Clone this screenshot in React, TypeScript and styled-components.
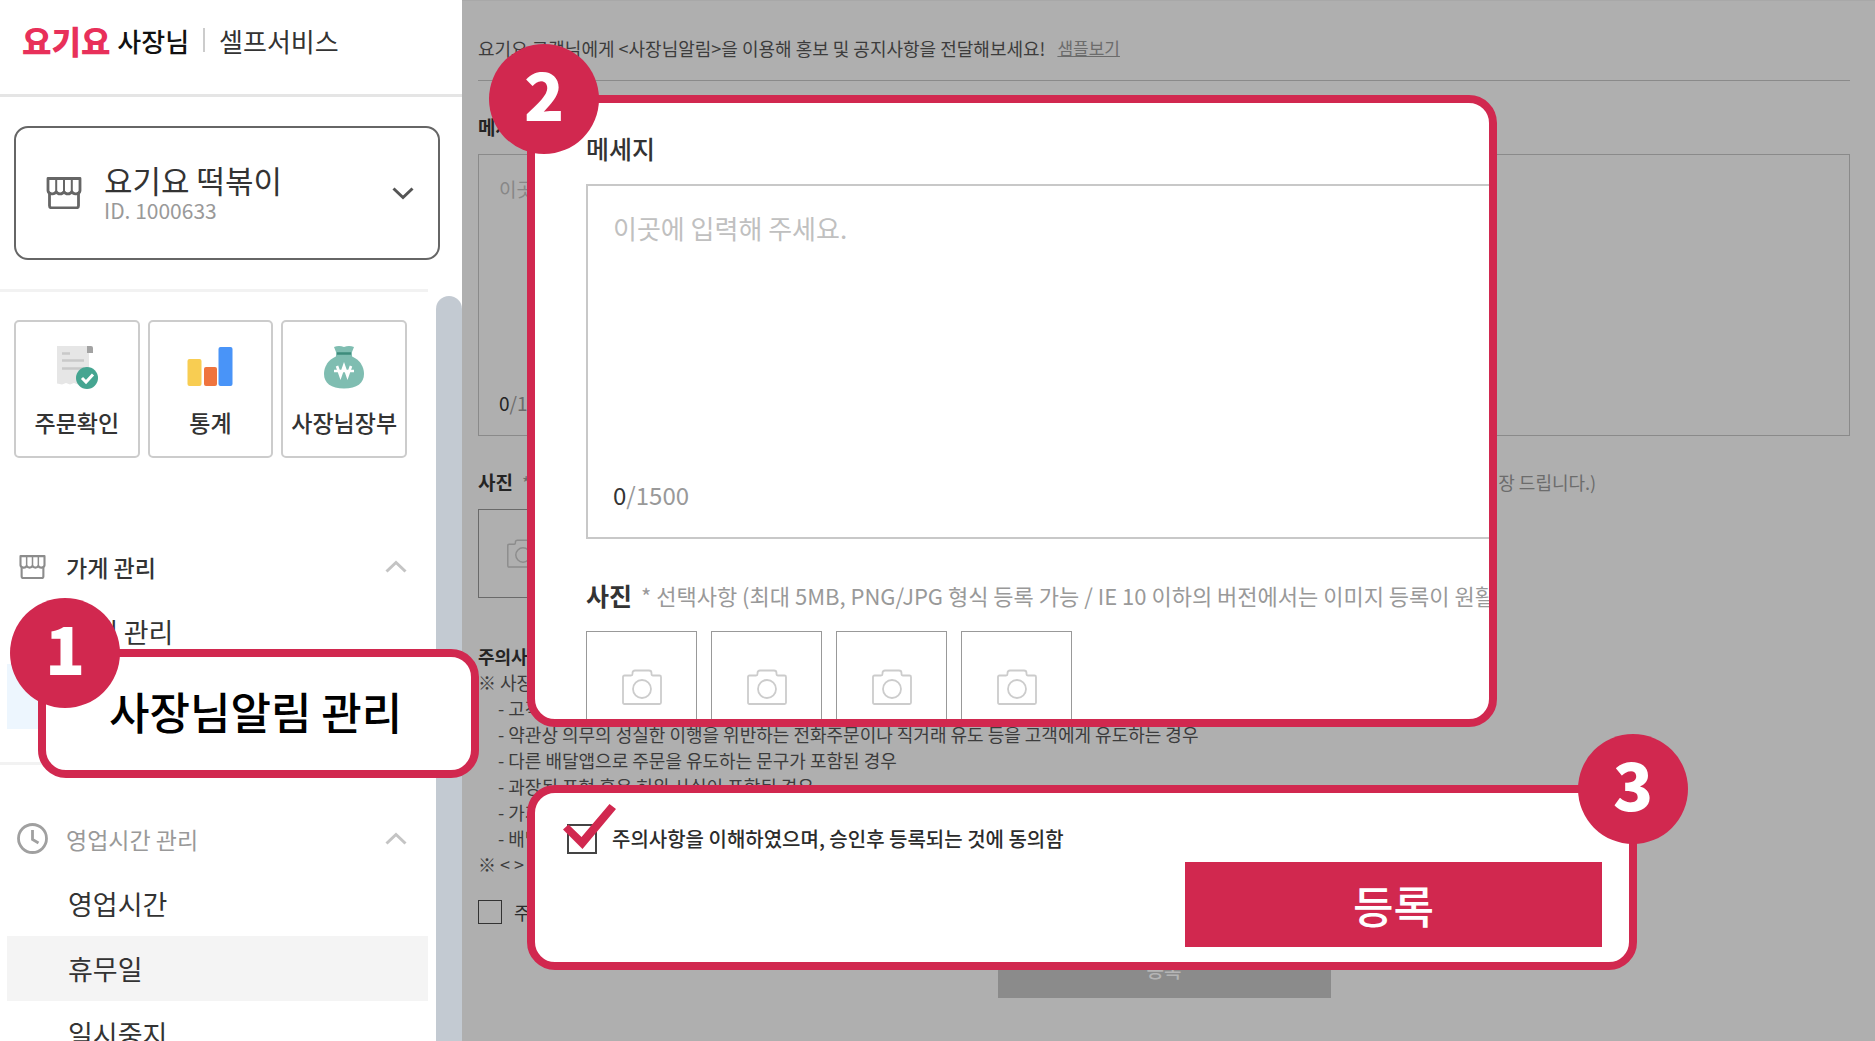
import React from "react";
import styled, { createGlobalStyle, css } from "styled-components";

const BRAND = "#d1284f";

const GlobalStyle = createGlobalStyle`
  *, *::before, *::after { box-sizing: border-box; }
  body {
    margin: 0;
    background: #afafaf;
    font-family: "Noto Sans CJK KR", "Noto Sans", sans-serif;
    color: #333;
  }
  button, input, textarea { font: inherit; color: inherit; }
  h1, h2, p, ul { margin: 0; padding: 0; font: inherit; }
  ul { list-style: none; }
`;

const Page = styled.div`
  position: relative;
  display: grid;
  grid-template-columns: 462px minmax(0, 1fr);
  height: 100vh;
  overflow: hidden;
`;

/* ---------- sidebar ---------- */

const Sidebar = styled.aside`
  display: flex;
  flex-direction: column;
  min-height: 0;
  overflow: hidden;
  background: #fff;
`;

const Brand = styled.header`
  display: flex;
  align-items: center;
  flex: none;
  height: 97px;
  padding: 0 22px 14px;
  border-bottom: 3px solid #e5e5e5;
  white-space: nowrap;
`;

const BrandName = styled.span`
  color: #e8305a;
  font-size: 32px;
  font-weight: 900;
  line-height: 40px;
`;

const BrandRole = styled.span`
  margin-left: 7px;
  color: #111;
  font-size: 26px;
  font-weight: 500;
`;

const BrandService = styled.span`
  display: flex;
  align-items: center;
  margin-left: 14px;
  color: #333;
  font-size: 26px;

  &::before {
    content: "";
    width: 2px;
    height: 24px;
    margin-right: 14px;
    background: #ccc;
  }
`;

const StoreSelect = styled.button`
  display: flex;
  align-items: center;
  flex: none;
  height: 134px;
  margin: 29px 22px 29px 14px;
  padding: 0 24px 0 30px;
  border: 2px solid #666;
  border-radius: 14px;
  background: #fff;
  text-align: left;
`;

const StoreText = styled.span`
  display: flex;
  flex: 1;
  flex-direction: column;
  margin-left: 22px;
`;

const StoreName = styled.span`
  font-size: 31px;
  line-height: 34px;
`;

const StoreId = styled.span`
  color: #999;
  font-size: 21px;
  line-height: 26px;
`;

const NavArea = styled.div`
  display: flex;
  flex: 1;
  justify-content: space-between;
  min-height: 0;
`;

const Nav = styled.nav`
  width: 428px;
  border-top: 3px solid #f2f2f2;
`;

const ScrollThumb = styled.div`
  width: 26px;
  margin-top: 7px;
  border-radius: 13px 13px 0 0;
  background: #c3cad2;
`;

const QuickRow = styled.div`
  display: grid;
  grid-template-columns: repeat(3, 1fr);
  gap: 8px;
  padding: 28px 21px 0 14px;
`;

const QuickButton = styled.button`
  display: flex;
  flex-direction: column;
  align-items: center;
  height: 138px;
  padding: 23px 0 0;
  border: 2px solid #ccc;
  border-radius: 5px;
  background: #fff;
  font-size: 23px;
  font-weight: 500;
  line-height: 32px;
  white-space: nowrap;

  svg { margin-bottom: 17px; }
`;

const Group = styled.section<{ $first?: boolean }>`
  margin-top: ${(p) => (p.$first ? "76px" : "33px")};
  ${(p) =>
    !p.$first &&
    css`
      padding-top: 41px;
      border-top: 3px solid #f2f2f2;
    `}
`;

const GroupHeader = styled.button<{ $muted?: boolean }>`
  display: flex;
  align-items: center;
  width: 100%;
  height: 65px;
  padding: 0 21px 0 16px;
  border: 0;
  background: none;
  color: ${(p) => (p.$muted ? "#999" : "#333")};
  font-size: 23px;
  font-weight: ${(p) => (p.$muted ? 400 : 500)};
  text-align: left;
`;

const GroupIcon = styled.span`
  display: flex;
  justify-content: center;
  width: 33px;
  margin-right: 17px;
`;

const GroupTitle = styled.span`
  flex: 1;
`;

const NavLink = styled.a<{ $tone?: "blue" | "gray" }>`
  display: flex;
  align-items: center;
  height: 65px;
  margin-left: 7px;
  padding-left: 61px;
  background: ${(p) =>
    p.$tone === "blue" ? "#edf6fe" : p.$tone === "gray" ? "#f4f4f4" : "none"};
  color: #333;
  font-size: 27px;
  line-height: 38px;
  text-decoration: none;
`;

/* ---------- form parts ---------- */

const Main = styled.main`
  min-width: 0;
  padding: 0 25px 0 16px;
  border-top: 1px solid #a8a8a8;
  background: #afafaf;
  color: #3c3c3c;
  font-size: 18px;
  line-height: 26px;
`;

const Intro = styled.p`
  display: flex;
  align-items: center;
  gap: 12px;
  height: 80px;
  padding-top: 14px;
  border-bottom: 1px solid #8a8a8a;
  white-space: nowrap;

  a { color: #6c6c6c; font-size: 17px; }
`;

const FieldTitle = styled.div<{ $large?: boolean }>`
  display: flex;
  align-items: center;
  gap: 9px;
  margin: ${(p) => (p.$large ? "40px 0 20px" : "33px 0 14px")};
  color: ${(p) => (p.$large ? "#333" : "#242424")};
  font-size: ${(p) => (p.$large ? "25px" : "19px")};
  line-height: ${(p) => (p.$large ? "32px" : "26px")};
  font-weight: 700;
  white-space: nowrap;

  &:first-of-type {
    margin-top: ${(p) => (p.$large ? "29px" : "33px")};
    font-weight: ${(p) => (p.$large ? 500 : 700)};
  }
`;

const Hint = styled.span<{ $large?: boolean }>`
  color: ${(p) => (p.$large ? "#999" : "#6c6c6c")};
  font-size: ${(p) => (p.$large ? "22px" : "18px")};
  font-weight: 400;
`;

const MessageBox = styled.div<{ $large?: boolean }>`
  display: flex;
  flex-direction: column;
  height: ${(p) => (p.$large ? "355px" : "282px")};
  margin-right: ${(p) => (p.$large ? "-40px" : "0")};
  padding: ${(p) => (p.$large ? "24px 25px" : "20px 20px 18px")};
  border: ${(p) => (p.$large ? "2px solid #c8c8c8" : "1px solid #8a8a8a")};
  font-size: ${(p) => (p.$large ? "24px" : "19px")};
  line-height: ${(p) => (p.$large ? "36px" : "28px")};
`;

const MessageInput = styled.textarea<{ $large?: boolean }>`
  flex: 1;
  padding: 0;
  border: 0;
  outline: 0;
  resize: none;
  background: none;
  font-size: ${(p) => (p.$large ? "26px" : "19px")};

  &::placeholder { color: ${(p) => (p.$large ? "#c0c0c0" : "#878787")}; opacity: 1; }
`;

const Counter = styled.span<{ $large?: boolean }>`
  color: ${(p) => (p.$large ? "#999" : "#6c6c6c")};
  b { color: ${(p) => (p.$large ? "#333" : "#242424")}; font-weight: 400; }
`;

const PhotoRow = styled.div<{ $large?: boolean }>`
  display: flex;
  gap: ${(p) => (p.$large ? "14px" : "11px")};
`;

const PhotoSlot = styled.button<{ $large?: boolean }>`
  display: flex;
  align-items: center;
  justify-content: center;
  width: ${(p) => (p.$large ? "111px" : "89px")};
  height: ${(p) => (p.$large ? "111px" : "89px")};
  padding: 0;
  border: 1px solid ${(p) => (p.$large ? "#999" : "#6a6a6a")};
  background: none;
  color: ${(p) => (p.$large ? "#ccc" : "#8c8c8c")};
`;

const NoticeTitle = styled.h2`
  margin-top: 45px;
  color: #242424;
  font-size: 18px;
  font-weight: 700;
`;

const NoticeLine = styled.li<{ $indent?: boolean }>`
  padding-left: ${(p) => (p.$indent ? "20px" : "0")};
  white-space: nowrap;
`;

const Agree = styled.label<{ $large?: boolean }>`
  display: flex;
  align-items: center;
  gap: ${(p) => (p.$large ? "15px" : "12px")};
  color: #2c2c2c;
  font-size: ${(p) => (p.$large ? "20px" : "18px")};
  font-weight: ${(p) => (p.$large ? 500 : 400)};
  line-height: 30px;
`;

const AgreeRow = styled.div`
  margin-top: 20px;
`;

const Tick = styled.span`
  position: relative;
  display: flex;

  svg {
    position: absolute;
    left: -4px;
    top: -20px;
    pointer-events: none;
  }
`;

const CheckInput = styled.input<{ $large?: boolean }>`
  appearance: none;
  width: ${(p) => (p.$large ? "30px" : "24px")};
  height: ${(p) => (p.$large ? "30px" : "24px")};
  margin: 0;
  border: ${(p) => (p.$large ? "2px solid #444" : "1px solid #333")};
`;

const SubmitButton = styled.button<{ $large?: boolean }>`
  display: block;
  width: ${(p) => (p.$large ? "417px" : "333px")};
  height: ${(p) => (p.$large ? "85px" : "57px")};
  margin: ${(p) => (p.$large ? "8px 0 0 auto" : "14px auto 0")};
  padding: 0;
  border: 0;
  background: ${(p) => (p.$large ? BRAND : "#8b8b8b")};
  color: ${(p) => (p.$large ? "#fff" : "#b4b4b4")};
  font-size: ${(p) => (p.$large ? "44px" : "19px")};
  font-weight: 500;
  line-height: ${(p) => (p.$large ? "60px" : "30px")};
`;

/* ---------- guide callouts laid over the page ---------- */

const Callout = styled.section<{ $x: number; $y: number; $w: number; $h: number }>`
  position: absolute;
  left: ${(p) => p.$x}px;
  top: ${(p) => p.$y}px;
  width: ${(p) => p.$w}px;
  height: ${(p) => p.$h}px;
`;

const CalloutBody = styled.div<{ $pad: string }>`
  height: 100%;
  overflow: hidden;
  padding: ${(p) => p.$pad};
  border: 8px solid ${BRAND};
  border-radius: 28px;
  background: #fff;
`;

const CalloutLabel = styled.p`
  color: #000;
  font-size: 44px;
  font-weight: 500;
  line-height: 60px;
  white-space: nowrap;
`;

const Badge = styled.span<{ $right?: boolean }>`
  position: absolute;
  top: -51px;
  ${(p) => (p.$right ? "right: -51px;" : "left: -38px;")}
  display: flex;
  align-items: center;
  justify-content: center;
  width: 110px;
  height: 110px;
  padding-bottom: 14px;
  border-radius: 50%;
  background: ${BRAND};
  color: #fff;
  font-size: 66px;
  font-weight: 900;
  line-height: 80px;
`;

const BadgeLow = styled(Badge)`
  left: -28px;
`;

/* ---------- drawings ---------- */

const StoreIcon = ({ size, color }: { size: number; color: string }) => (
  <svg width={size} height={(size * 32) / 36} viewBox="0 0 36 32" fill="none" stroke={color} strokeWidth="2.8" strokeLinejoin="round">
    <path d="M2 1.5h32v12.2a4.3 3.6 0 0 1-8.2 1 4.3 3.6 0 0 1-7.8 0 4.3 3.6 0 0 1-7.8 0A4.3 3.6 0 0 1 2 13.7z" />
    <path d="M10.2 1.5v13.2M18 1.5v13.2M25.8 1.5v13.2" strokeWidth="2" />
    <path d="M3.5 16.5v12.3a2 2 0 0 0 2 2h25a2 2 0 0 0 2-2V16.5" />
  </svg>
);

const Chevron = ({ up, color }: { up?: boolean; color: string }) => (
  <svg width="22" height="13" viewBox="0 0 22 13" fill="none" stroke={color} strokeWidth="3">
    <path d={up ? "M1.5 11.5 11 2.5l9.5 9" : "M1.5 1.5 11 10.5l9.5-9"} />
  </svg>
);

const ClockIcon = () => (
  <svg width="33" height="33" viewBox="0 0 33 33" fill="none" stroke="#a0a0a0" strokeWidth="2.8">
    <circle cx="16.5" cy="16.5" r="14" />
    <path d="M16.5 8v9.5l6 3.5" />
  </svg>
);

const ReceiptIcon = () => (
  <svg width="42" height="44" viewBox="0 0 42 44">
    <path d="M1 1h32v37l-3 1.500-4-1.500-4 1.500-4-1.500-4 1.500-4-1.500-4 1.500-5-1z" fill="#e6e6e6" />
    <path d="M31 1h4q2 0 2 2v5h-6z" fill="#a3a3a3" />
    <path d="M6 8.500h8M6 15.500h22M6 23.500h22" stroke="#c9c9c9" strokeWidth="2.500" />
    <circle cx="31" cy="33" r="11" fill="#45a591" />
    <path d="m26 33 4 4 7-7.500" fill="none" stroke="#fff" strokeWidth="3" />
  </svg>
);

const StatsIcon = () => (
  <svg width="46" height="44" viewBox="0 0 46 44">
    <rect x="0.5" y="14" width="14" height="27" rx="2" fill="#f8cd52" />
    <rect x="17" y="22" width="13" height="19" rx="2" fill="#ef743e" />
    <rect x="31.5" y="2" width="14" height="39" rx="2" fill="#4994f8" />
  </svg>
);

const MoneyBagIcon = () => (
  <svg width="42" height="44" viewBox="0 0 42 44">
    <path d="M11 2q5-2 10 0 5-2 10 0l-2 5v6H13V7z" fill="#7fbdb1" />
    <path d="M21 10c12 0 20 9 20 19 0 9-7 14.500-20 14.500S1 38 1 29c0-10 8-19 20-19z" fill="#7fbdb1" />
    <path d="M14 8.500h14" stroke="#3d8c7c" strokeWidth="2.500" />
    <path d="m14 21 3.500 10L21 21l3.500 10L28 21M11 26h20" fill="none" stroke="#fff" strokeWidth="2.600" />
  </svg>
);

const CameraIcon = ({ size }: { size: number }) => (
  <svg width={size} height={(size * 36) / 40} viewBox="0 0 40 36" fill="none" stroke="currentColor" strokeWidth="1.8" strokeLinejoin="round">
    <path d="M2.500 6.500H9q1.500 0 1.500-1.500V4q0-2.500 2.500-2.500h14q2.500 0 2.500 2.500v1q0 1.500 1.500 1.500h6.500q1.500 0 1.500 1.500v25.500q0 1.500-1.500 1.500h-35Q1 35 1 33.500V8q0-1.500 1.500-1.500z" />
    <circle cx="20" cy="20" r="9" />
  </svg>
);

const CheckMark = () => (
  <svg width="54" height="46" viewBox="0 0 54 46">
    <path d="M0 25.500 5.500 20.500 18.500 33 46.500 0 53 5 19.500 45z" fill={BRAND} />
  </svg>
);

/* ---------- page ---------- */

const HINT =
  "* 선택사항 (최대 5MB, PNG/JPG 형식 등록 가능 / IE 10 이하의 버전에서는 이미지 등록이 원활하지 않을 수 있으니, 크롬 브라우저 권장 드립니다.)";

const NOTICES = [
  "- 고객에게 불쾌감을 주는 내용이 포함된 경우",
  "- 약관상 의무의 성실한 이행을 위반하는 전화주문이나 직거래 유도 등을 고객에게 유도하는 경우",
  "- 다른 배달앱으로 주문을 유도하는 문구가 포함된 경우",
  "- 과장된 표현 혹은 허위 사실이 포함된 경우",
  "- 가게와 관련 없는 내용",
  "- 배달과 관련 없는 내용",
];

function MessageForm({ id, large }: { id: string; large?: boolean }) {
  return (
    <>
      <FieldTitle $large={large}>
        <label htmlFor={id}>메세지</label>
      </FieldTitle>
      <MessageBox $large={large}>
        <MessageInput id={id} $large={large} placeholder="이곳에 입력해 주세요." />
        <Counter $large={large}>
          <b>0</b>/1500
        </Counter>
      </MessageBox>
      <FieldTitle $large={large}>
        사진 <Hint $large={large}>{HINT}</Hint>
      </FieldTitle>
      <PhotoRow $large={large}>
        {[1, 2, 3, 4].map((n) => (
          <PhotoSlot key={n} type="button" $large={large} aria-label={`사진 ${n}`}>
            <CameraIcon size={large ? 40 : 32} />
          </PhotoSlot>
        ))}
      </PhotoRow>
    </>
  );
}

export default function App() {
  return (
    <>
      <GlobalStyle />
      <Page>
        <Sidebar>
          <Brand>
            <BrandName>요기요</BrandName>
            <BrandRole>사장님</BrandRole>
            <BrandService>셀프서비스</BrandService>
          </Brand>
          <StoreSelect type="button">
            <StoreIcon size={36} color="#666" />
            <StoreText>
              <StoreName>요기요 떡볶이</StoreName>
              <StoreId>ID. 1000633</StoreId>
            </StoreText>
            <Chevron color="#555" />
          </StoreSelect>
          <NavArea>
            <Nav>
              <QuickRow>
                <QuickButton type="button">
                  <ReceiptIcon />
                  주문확인
                </QuickButton>
                <QuickButton type="button">
                  <StatsIcon />
                  통계
                </QuickButton>
                <QuickButton type="button">
                  <MoneyBagIcon />
                  사장님장부
                </QuickButton>
              </QuickRow>
              <Group $first>
                <GroupHeader type="button">
                  <GroupIcon>
                    <StoreIcon size={27} color="#8c8c8c" />
                  </GroupIcon>
                  <GroupTitle>가게 관리</GroupTitle>
                  <Chevron up color="#c4c4c4" />
                </GroupHeader>
                <NavLink href="#store">가게 관리</NavLink>
                <NavLink href="#notice" $tone="blue" aria-label="사장님알림 관리" />
              </Group>
              <Group>
                <GroupHeader type="button" $muted>
                  <GroupIcon>
                    <ClockIcon />
                  </GroupIcon>
                  <GroupTitle>영업시간 관리</GroupTitle>
                  <Chevron up color="#c4c4c4" />
                </GroupHeader>
                <NavLink href="#hours">영업시간</NavLink>
                <NavLink href="#holiday" $tone="gray">휴무일</NavLink>
                <NavLink href="#pause">일시중지</NavLink>
              </Group>
            </Nav>
            <ScrollThumb />
          </NavArea>
        </Sidebar>

        <Main>
          <Intro>
            요기요 고객님에게 &lt;사장님알림&gt;을 이용해 홍보 및 공지사항을 전달해보세요!
            <a href="#sample">샘플보기</a>
          </Intro>
          <MessageForm id="message" />
          <NoticeTitle>주의사항</NoticeTitle>
          <ul>
            <NoticeLine>※ 사장님알림 등록 제한</NoticeLine>
            {NOTICES.map((text) => (
              <NoticeLine key={text} $indent>
                {text}
              </NoticeLine>
            ))}
            <NoticeLine>※ &lt; &gt;</NoticeLine>
          </ul>
          <AgreeRow>
            <Agree>
              <CheckInput type="checkbox" />
              주의사항을 이해함
            </Agree>
          </AgreeRow>
          <SubmitButton type="button">등록</SubmitButton>
        </Main>

        <Callout $x={38} $y={649} $w={441} $h={129}>
          <CalloutBody $pad="24px 0 0 63px">
            <CalloutLabel>사장님알림 관리</CalloutLabel>
          </CalloutBody>
          <BadgeLow>1</BadgeLow>
        </Callout>

        <Callout $x={527} $y={95} $w={970} $h={632}>
          <CalloutBody $pad="0 0 0 51px">
            <MessageForm id="message-large" large />
          </CalloutBody>
          <Badge>2</Badge>
        </Callout>

        <Callout $x={527} $y={785} $w={1110} $h={185}>
          <CalloutBody $pad="31px 27px 0 32px">
            <Agree $large>
              <Tick>
                <CheckInput type="checkbox" $large defaultChecked />
                <CheckMark />
              </Tick>
              주의사항을 이해하였으며, 승인후 등록되는 것에 동의함
            </Agree>
            <SubmitButton type="button" $large>등록</SubmitButton>
          </CalloutBody>
          <Badge $right>3</Badge>
        </Callout>
      </Page>
    </>
  );
}
